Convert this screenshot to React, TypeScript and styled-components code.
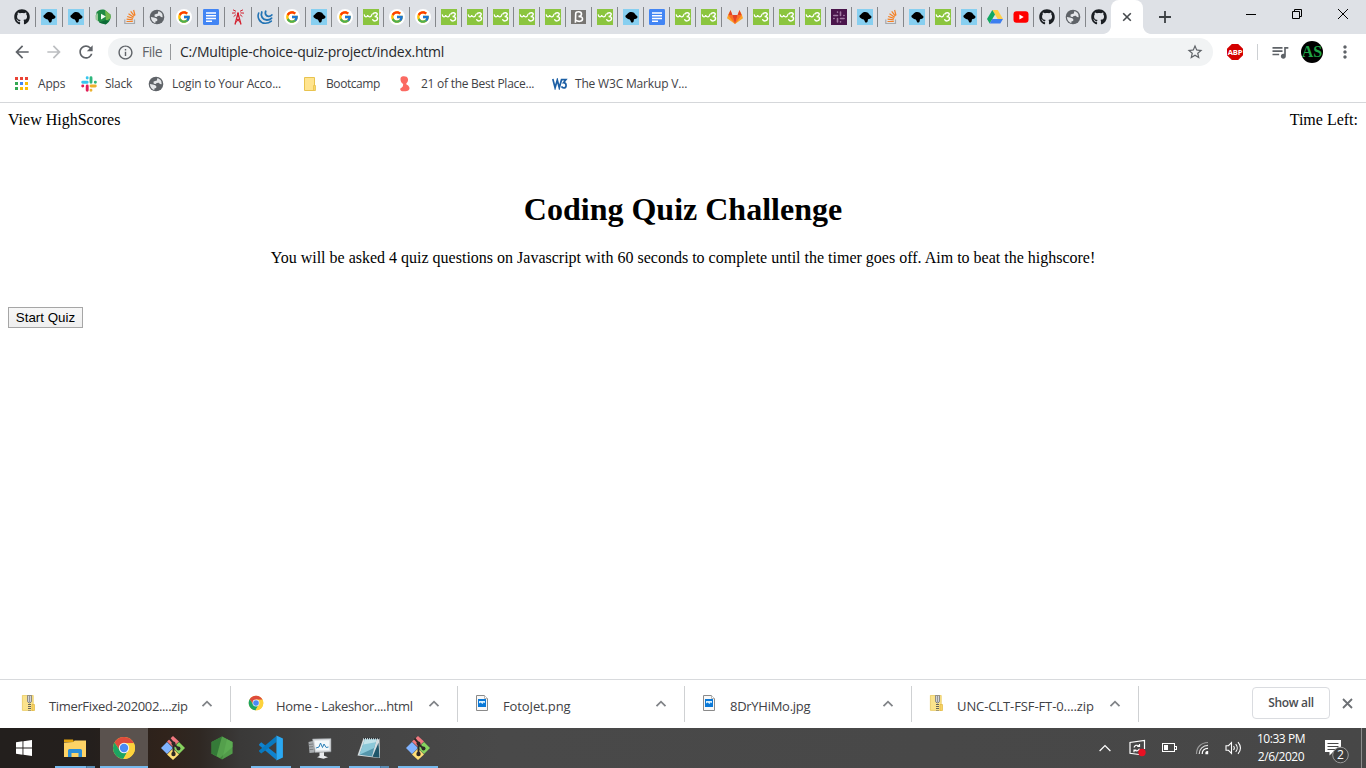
import React from "react";
import styled, { createGlobalStyle } from "styled-components";
import { FaGithub } from "react-icons/fa";
import { FcGoogle } from "react-icons/fc";
import {
  MdArrowBack,
  MdArrowForward,
  MdInfoOutline,
  MdMoreVert,
  MdQueueMusic,
  MdRefresh,
  MdStarBorder,
} from "react-icons/md";

const ui = `"Open Sans", "Noto Sans", sans-serif`;

const GlobalStyle = createGlobalStyle`
  html, body, #root { height: 100%; }
  body { margin: 0; overflow: hidden; background: #fff; }
  svg { display: block; flex: none; }
  *, *::before, *::after { box-sizing: border-box; }
`;

const Screen = styled.div`
  width: 1366px;
  height: 768px;
  display: flex;
  flex-direction: column;
  background: #fff;
  color: #000;
`;

/* ---------- tab strip ---------- */

const TabStrip = styled.div`
  flex: none;
  height: 34px;
  display: flex;
  padding-left: 9px;
  background: #dee1e6;
`;

const Tab = styled.div<{ $wide: boolean; $last: boolean }>`
  flex: none;
  width: ${(p) => (p.$last ? 25 : p.$wide ? 27 : 26)}px;
  height: 34px;
  display: flex;
  align-items: center;
  padding-left: 5px;
  background: ${(p) =>
    p.$last ? "none" : "linear-gradient(#84878b, #84878b) right 7px / 1px 20px no-repeat"};
  background-position: right 7px;
`;

const ActiveTab = styled.div`
  position: relative;
  flex: none;
  width: 32px;
  height: 34px;
  display: flex;
  align-items: center;
  justify-content: center;
  border-radius: 8px 8px 0 0;
  background: #fff;

  &::before,
  &::after {
    content: "";
    position: absolute;
    bottom: 0;
    width: 8px;
    height: 8px;
  }
  &::before {
    left: -8px;
    background: radial-gradient(circle at 0 0, transparent 7.5px, #fff 8.2px);
  }
  &::after {
    right: -8px;
    background: radial-gradient(circle at 100% 0, transparent 7.5px, #fff 8.2px);
  }
`;

const NewTab = styled.div`
  width: 28px;
  height: 34px;
  margin-left: 8px;
  display: flex;
  align-items: center;
  justify-content: center;
`;

const WindowButtons = styled.div`
  margin-left: auto;
  display: flex;
  height: 28px;
`;

const WindowButton = styled.div`
  width: 46px;
  display: flex;
  align-items: center;
  justify-content: center;
`;

const FavCircle = styled.div`
  width: 16px;
  height: 16px;
  border-radius: 50%;
  display: flex;
  align-items: center;
  justify-content: center;
  background: #fff;
`;

/* ---------- toolbar ---------- */

const Toolbar = styled.div`
  flex: none;
  height: 36px;
  display: flex;
  align-items: center;
  padding-left: 6px;
  color: #5f6368;
`;

const ToolButton = styled.div<{ $faded?: boolean; $width?: number }>`
  flex: none;
  width: ${(p) => p.$width ?? 32}px;
  display: flex;
  justify-content: center;
  color: ${(p) => (p.$faded ? "#bcbec1" : "#5f6368")};
`;

const Omnibox = styled.div`
  flex: none;
  width: 1105px;
  height: 28px;
  margin-left: 6px;
  display: flex;
  align-items: center;
  padding: 0 9px 0 9px;
  border-radius: 14px;
  background: #f1f3f4;
  font: 14px/28px ${ui};
`;

const Scheme = styled.span`
  width: 28px;
  margin-left: 8px;
  letter-spacing: -0.5px;
  color: #5f6368;
`;

const Address = styled.span`
  flex: 1;
  padding-left: 9px;
  letter-spacing: -0.235px;
  color: #27292c;
`;

const VLine = styled.div<{ $color?: string }>`
  flex: none;
  width: 1px;
  height: 16px;
  background: ${(p) => p.$color ?? "#96999c"};
`;

const Avatar = styled.div`
  flex: none;
  width: 22px;
  height: 22px;
  border-radius: 50%;
  overflow: hidden;
  background: #000;
`;

/* ---------- bookmarks ---------- */

const BookmarkBar = styled.div`
  flex: none;
  height: 33px;
  display: flex;
  align-items: flex-start;
  padding-left: 14px;
  border-bottom: 1px solid #d5d7da;
`;

const Bookmark = styled.div<{ $width: number; $gap: number; $spacing: number }>`
  flex: none;
  width: ${(p) => p.$width}px;
  height: 28px;
  display: flex;
  align-items: center;
  gap: ${(p) => p.$gap}px;
  font: 12px/28px ${ui};
  letter-spacing: ${(p) => p.$spacing}px;
  white-space: nowrap;
  color: #3f4246;
`;

/* ---------- page ---------- */

const Page = styled.main`
  flex: 1;
  padding: 8px;
  font: 16px/18px "Liberation Serif", serif;
`;

const PageTop = styled.div`
  display: flex;
  justify-content: space-between;
`;

const Title = styled.h1`
  margin: 62px 0 0;
  font-size: 32px;
  line-height: 37px;
  text-align: center;
`;

const Intro = styled.p`
  margin: 21px 0 40px;
  text-align: center;
`;

const StartButton = styled.button`
  display: block;
  width: 75px;
  height: 21px;
  padding: 0;
  border: 1px solid #a6a6a6;
  border-radius: 0;
  background: linear-gradient(#f7f7f7, #efefef);
  color: #000;
  font: 13.33px/18px "Liberation Sans", sans-serif;
`;

/* ---------- download shelf ---------- */

const Shelf = styled.div`
  flex: none;
  height: 49px;
  display: flex;
  padding-left: 4px;
  border-top: 1px solid #d8dadd;
`;

const Download = styled.div`
  flex: none;
  width: 227px;
  height: 36px;
  margin-top: 6px;
  display: flex;
  align-items: flex-start;
  padding: 9px 17px 0 17px;
  border-right: 1px solid #cfd1d3;
`;

const FileName = styled.span<{ $spacing: number }>`
  flex: 1;
  padding-left: 12px;
  margin-top: 1px;
  font: 13px/20px ${ui};
  letter-spacing: ${(p) => p.$spacing}px;
  white-space: nowrap;
  color: #3f4246;
`;

const Chevron = styled.svg`
  margin-top: 3px;
`;

const ShowAll = styled.div`
  flex: none;
  width: 78px;
  height: 32px;
  margin: 7px 12px 0 auto;
  border: 1px solid #dadce0;
  border-radius: 4px;
  text-align: center;
  font: 600 12px/30px ${ui};
  letter-spacing: -0.35px;
  color: #4a4d51;
`;

const ShelfClose = styled.svg`
  margin: 18px 13px 0 0;
`;

/* ---------- taskbar ---------- */

const Taskbar = styled.div`
  flex: none;
  height: 40px;
  display: flex;
  background: linear-gradient(
    90deg,
    #231f1d 0,
    #241f1d 90px,
    #30231b 165px,
    #2f2823 200px,
    #3a3938 240px,
    #444444 330px,
    #494949 500px,
    #474747 100%
  );
`;

const StartMenu = styled.div`
  width: 48px;
  margin-right: 3px;
  display: flex;
  align-items: center;
  justify-content: center;
`;

const bar = {
  none: "none",
  one: "linear-gradient(#76b9ed, #76b9ed) 4px 38px / 40px 2px no-repeat",
  many:
    "linear-gradient(90deg, #76b9ed 31px, #49779b 31px, #49779b 32px, #5a8db5 32px) 4px 38px / 40px 2px no-repeat",
  active: "linear-gradient(#76b9ed, #76b9ed) 0 38px / 48px 2px no-repeat, #5a524e",
};

const TaskItem = styled.div<{ $state: keyof typeof bar }>`
  flex: none;
  width: 48px;
  height: 40px;
  margin-right: 1px;
  display: flex;
  align-items: center;
  justify-content: center;
  background: ${(p) => bar[p.$state]};
`;

const Tray = styled.div`
  margin-left: auto;
  display: flex;
`;

const TrayItem = styled.div<{ $width: number }>`
  flex: none;
  width: ${(p) => p.$width}px;
  height: 40px;
  display: flex;
  align-items: center;
  justify-content: center;
`;

const Clock = styled.div`
  width: 64px;
  padding-top: 2px;
  text-align: center;
  font: 12px/18px ${ui};
  letter-spacing: -0.45px;
  white-space: nowrap;
  color: #fff;
`;

const ShowDesktop = styled.div`
  width: 5px;
  height: 40px;
  border-left: 1px solid #8c8c8c;
`;

/* ---------- icons ---------- */

const Beagle = () => (
  <svg width="16" height="16" viewBox="0 0 16 16">
    <path fill="#87cff0" d="M0 0h16v16H0z" />
    <path d="M2.600 6.600C3.500 5.800 4.300 5.300 5 4.200 6.500 2.700 9.300 2.700 11 3.800l2 2.500c1.300.6 1.700 1.400 1.400 2.300-.6 1.300-2 1.600-3.400 1.700-.3.500-.1 1.200-.3 2C10.300 13.800 8.500 14 8 12.900c-.2-1-.5-1.800-1.200-2.500-1.300-.3-2.300-.6-3.200-1.400C2.600 8.700 2.100 7.500 2.600 6.600z" />
  </svg>
);

const Globe = ({ size = 16 }: { size?: number }) => (
  <svg width={size} height={size} viewBox="0 0 16 16">
    <circle cx="8" cy="8" r="7.3" fill="#5f6368" />
    <path
      fill="#e4e6e9"
      d="M9.200 2.200c1.800.3 3.300 1.300 4.100 3l.4 3.100-1.800-.2-1-1.400-2.300.2-.7 1.100-2.100-.3-.4-2 1.600-.7 1.900-.4zM1.900 8.100l2.900.4 2.600.8 1.100 1.500-.5 1.300-1.600.3-.1 1.800C4 13.500 2 11.300 1.900 8.100z"
    />
  </svg>
);

const Google = () => (
  <FavCircle>
    <FcGoogle size={14} />
  </FavCircle>
);

const Github = () => <FaGithub size={16} color="#1b1f23" />;

const Docs = () => (
  <svg width="16" height="16" viewBox="0 0 16 16">
    <rect width="16" height="16" rx="1.2" fill="#4285f4" />
    <path stroke="#fff" strokeWidth="1.5" d="M3 4h10M3 6.8h10M3 9.5h10M3 12.3h6" />
  </svg>
);

const W3 = () => (
  <svg width="16" height="16" viewBox="0 0 16 16">
    <path fill="#8bc53f" d="M0 0h16v16H0z" />
    <g fill="none" stroke="#fff" strokeLinecap="round">
      <path strokeWidth="1.300" d="M1.300 5.800c.1 2.700 3.200 2.700 3.400.2.300 2.600 3.700 2.400 4.200-.5" />
      <path strokeWidth="1.500" d="M10 4.900c.7-1.700 4.600-1.600 4.200.6-.2 1.300-1.400 1.800-2.600 1.900 2 0 3.100.9 2.900 2.500-.3 2.300-3.800 2.700-4.700.8" />
    </g>
  </svg>
);

const StackOverflow = () => (
  <svg width="16" height="16" viewBox="0 0 16 16" fill="none" strokeWidth="1.2">
    <path stroke="#a7a9ac" d="M2.800 10.500v4h9.700v-4" />
    <path stroke="#f48024" d="M4.500 12.500h6.300M4.600 10.200l6.200.7M5.200 7.500l5.900 1.900M6.500 4.800l5.200 3.400M8.700 2.400l3.700 4.800M11.600 1l1.400 5.500" />
  </svg>
);

const GreenPlay = () => (
  <svg width="16" height="16" viewBox="0 0 16 16">
    <path fill="#1f8a43" d="M1.500 3.500C3 1 6.500-.3 9.500.8l5.800 4.700c1.300 3-.8 8.200-4.300 9.700L5 14 1 9.500z" />
    <path fill="#9bc99b" d="M.3 6.500 3 4v8.500L.6 10.500z" />
    <path fill="#72b84a" d="m10 1 5.300 4.500L15.700 9 11 12z" />
    <path fill="#0c6a36" d="m4 13.500 7-2.500 3 1.300-3.500 3.200z" />
    <path fill="#f2fff2" d="M6 4.800v5.700l4.800-2.900z" />
  </svg>
);

const Antenna = () => (
  <svg width="16" height="16" viewBox="0 0 16 16" fill="none" stroke="#d3202f">
    <path strokeWidth="1.300" d="M7.800 5 5 15.500M8.200 5 11 15.500" />
    <path strokeWidth="2" d="M8 3.500v4" />
    <path strokeWidth="1" d="m6.700 9.500 3.600 4.200M9.300 9.500l-3.600 4.200" />
    <path strokeWidth="1" d="M6 2.300 3 .8M5.600 3.900 2 4.100M6 5.600 3.600 7.600M10 2.300l3-1.500M10.400 3.900l3.600.2M10 5.600l2.400 2" />
  </svg>
);

const Jquery = () => (
  <svg width="16" height="16" viewBox="0 0 16 16" fill="none" stroke="#2374b5" strokeLinecap="round">
    <path strokeWidth="1.600" d="M1.700 4C-.2 8.500 2.700 14 8 14.300c2.700.1 4.600-.6 6.300-2.200" />
    <path strokeWidth="1.800" d="M4.800 3c-1.500 4 .9 7.800 4.900 8 2.100.1 3.700-.6 4.900-1.900" />
    <path strokeWidth="1.800" d="M8.700 2.300c-1 2.700.5 4.800 2.800 5 1.400.1 2.500-.4 3.300-1.300" />
  </svg>
);

const Bootstrap = () => (
  <svg width="16" height="16" viewBox="0 0 16 16">
    <path fill="#777572" d="M0 1h15v14H0z" />
    <path
      fill="none"
      stroke="#fff"
      strokeWidth="1.6"
      d="M4.400 13.800 4.700 4.500c.3-2.300 5.800-2.500 5.800.5 0 1.600-1.200 2.300-3 2.400 2.700 0 4.300.8 4 2.800-.3 2.700-4.500 2.600-6.700 1"
    />
  </svg>
);

const Gitlab = () => (
  <svg width="16" height="16" viewBox="0 0 16 16">
    <path fill="#fca326" d="M8 15 0 9.200l1.300-4 2.300-4 1.800 5h5.200l1.800-5 2.300 4 1.300 4z" />
    <path fill="#fc6d26" d="M8 15 1.200 6h4.200zM8 15l6.800-9h-4.200z" />
    <path fill="#e24329" d="M5.400 6h5.200L8 15zM3.500 1 5.400 6H1.500zM12.500 1l2 5h-3.900z" />
  </svg>
);

const SlackTab = () => (
  <svg width="16" height="16" viewBox="0 0 16 16">
    <path fill="#4a154b" d="M0 0h16v16H0z" />
    <path
      fill="none"
      stroke="#a07ba2"
      strokeWidth="1.600"
      strokeLinecap="round"
      d="M2.800 6.500h3.700M6.500 3v.3M9.500 3v3.500M12.800 6.500h.3M9.500 9.500h3.600M9.500 12.700v.3M6.500 9.500V13M2.800 9.500h.3"
    />
  </svg>
);

const Drive = () => (
  <svg width="16" height="16" viewBox="0 0 16 16">
    <path fill="#ffcf48" d="M5.300 1h5.400L16 10h-5.300z" />
    <path fill="#11a861" d="M5.300 1 8 5.500 2.700 14.600 0 10z" />
    <path fill="#3d7ef0" d="M5.300 10H16l-2.700 4.600H2.700z" />
  </svg>
);

const YouTube = () => (
  <svg width="16" height="16" viewBox="0 0 16 16">
    <rect x="0.5" y="2.2" width="15" height="11.6" rx="3" fill="#f00" />
    <path fill="#fff" d="M6.400 5.500v5L10.700 8z" />
  </svg>
);

const SlackColor = () => (
  <svg width="16" height="16" viewBox="0 0 16 16" fill="none" strokeWidth="2.9" strokeLinecap="round">
    <path stroke="#36c5f0" d="M1.700 6.300h4.500M6.200 1.800v.2" />
    <path stroke="#2eb67d" d="M10 1.800v4.400M14.300 6.200h.1" />
    <path stroke="#ecb22e" d="M10 10h4.300M10 14.200v.1" />
    <path stroke="#e01e5a" d="M6.200 10v4.300M1.700 10h.1" />
  </svg>
);

const AppsGrid = () => (
  <svg width="14" height="14" viewBox="0 0 14 14" shapeRendering="crispEdges">
    <path fill="#ea4335" d="M1 0h3v3H1zM6 0h3v3H6zM11 0h3v3h-3z" />
    <path fill="#34a853" d="M1 5h3v3H1zM1 10h3v3H1z" />
    <path fill="#4285f4" d="M6 5h3v3H6z" />
    <path fill="#fbbc05" d="M11 5h3v3h-3zM6 10h3v3H6zM11 10h3v3h-3z" />
  </svg>
);

const Folder = () => (
  <svg width="14" height="16" viewBox="0 0 14 16">
    <path fill="#ffe48f" stroke="#e8c34f" d="M1.500 1.500h10v13h-10z" />
    <path fill="#f9d769" stroke="#e8c34f" strokeWidth=".8" d="M10.500 9.500h2v5h-2z" />
  </svg>
);

const PinkFigure = () => (
  <svg width="12" height="16" viewBox="0 0 12 16" fill="#fb6a62">
    <path d="M1.800 1.500C3-.2 8.500-.3 9 3c.3 2-.8 3.500-1.700 4.500v2.200H4.200V8C2.300 7.200.8 4 1.800 1.500z" />
    <path d="M4 8.500h3.600c2.500 1.300 3.600 3.500 2.600 5-1.500 2-4.800 2-7 1.700C1 14.500.5 12.500 2.500 11.700 3.700 11 4.200 10 4 8.500z" />
  </svg>
);

const W3C = () => (
  <svg width="16" height="12" viewBox="0 0 16 12" fill="none" stroke="#1c5fa5" strokeWidth="1.7">
    <path d="m.8 1 2.300 8.800L5.300 2l2 7.800L9.700 1" />
    <path d="M9.300 1.700h4.600l-2.400 3c3.500.2 3.300 5.200.2 5.200-1 0-1.800-.6-2.200-1.500" />
  </svg>
);

const Abp = () => (
  <svg width="16" height="16" viewBox="0 0 16 16">
    <path fill="#d40000" d="M4.800 0h6.400L16 4.800v6.400L11.200 16H4.800L0 11.200V4.800z" />
    <text x="8" y="10.8" fill="#fff" textAnchor="middle" fontFamily="Open Sans, sans-serif" fontWeight="700" fontSize="7.600" letterSpacing="-0.2">
      ABP
    </text>
  </svg>
);

const ZipFile = () => (
  <svg width="16" height="18" viewBox="0 1 16 18">
    <path fill="#fbe38c" stroke="#e8c85c" strokeWidth=".8" d="M1.400 1.400h10.800v15H1.400z" />
    <path fill="#f7d264" stroke="#e3b941" strokeWidth=".7" d="M11 10.500h2.500v6H11z" />
    <path stroke="#66645c" strokeWidth="3" strokeDasharray="1 1" d="M8.500 8v8.500" />
    <path fill="#d8dadd" stroke="#777" strokeWidth=".8" d="M6.500 1.400h4v6.300l-2 1.300-2-1.300z" />
    <path stroke="#555" strokeWidth="1.200" strokeDasharray="1 1" d="M8.500 2.500v5" />
  </svg>
);

const ImageFile = () => (
  <svg width="16" height="18" viewBox="0 1 16 18">
    <path fill="#f8f8f8" stroke="#8a8a8a" d="M1.500 1.500h8l3 3v12h-11z" />
    <path fill="#fff" stroke="#a3a3a3" strokeWidth=".8" d="M9.500 1.500v3h3" />
    <path fill="#0a78d7" d="M3 5h8v8H3z" />
    <path fill="#d7f0ff" d="M4 7h6v2.300L8.800 8.300 7.500 10 5.600 8.500 4 9.600z" />
  </svg>
);

const Chrome = ({ size }: { size: number }) => (
  <svg width={size} height={size} viewBox="0 0 24 24">
    <circle cx="12" cy="12" r="11" fill="#fdd23c" />
    <path fill="#de4b3c" d="M2.480 6.500A11 11 0 0 1 21.950 7.300H12L7.900 14.400z" />
    <path fill="#1da462" d="M2.480 6.500 7.900 14.400 16 14.500 11.500 23A11 11 0 0 1 2.480 6.500z" />
    <path fill="#fdd23c" d="M12 7.300h9.950A11 11 0 0 1 11.200 23l4.900-8.600z" />
    <circle cx="12" cy="12" r="5.200" fill="#f4f4f4" />
    <circle cx="12" cy="12" r="4.200" fill="#4a8af4" />
  </svg>
);

const FileExplorer = () => (
  <svg width="24" height="24" viewBox="0 0 24 24">
    <path fill="#e2a30f" d="M1 3.500h9l1 2.500H1z" />
    <path fill="#fdd366" d="M1 6.500 10.500 6l1-1.500H23V21H1z" />
    <path fill="#2c8fd8" d="M5 21v-6.500Q5 13 6.500 13h11Q19 13 19 14.500V21h-3.500v-4h-7v4z" />
  </svg>
);

const Git = () => (
  <svg width="26" height="26" viewBox="0 0 26 26">
    <path fill="#f0787f" d="m13 1 6 5.500-6 5.500-6-5.500z" />
    <path fill="#80b3ff" d="m7 7 6 6-6 6-6-6z" />
    <path fill="#87d35f" d="m19 7 6 6-6 6-6-6z" />
    <path fill="#ffdf76" d="m13 13.500 6 6-6 5.500-6-5.500z" />
    <g stroke="#2d2826" strokeWidth="1.9" fill="none">
      <path d="M9.500 3.500 13.500 8v12M13.500 9l5 4.500" />
    </g>
    <g fill="#2d2826">
      <circle cx="13.5" cy="8.5" r="2" />
      <circle cx="18.5" cy="13.5" r="2" />
      <circle cx="13.5" cy="19" r="2.2" />
    </g>
  </svg>
);

const NodeHex = () => (
  <svg width="24" height="26" viewBox="0 0 24 26">
    <path fill="#43853d" d="M12 1.500 22.500 7v11.500L12 24.500 1.500 18.500V7z" />
    <path fill="#54a04c" d="M12 1.500 22.500 7v5L10 23 1.500 18.500z" />
    <path fill="#357a38" d="M1.500 7 12 1.500 6.500 21.500l-5-3z" />
    <path fill="#67b85a" d="m17 4.200 5.500 2.800v11.500L12 24.500z" opacity=".45" />
  </svg>
);

const VsCode = () => (
  <svg width="26" height="26" viewBox="0 0 24 24">
    <path fill="#0f83cf" d="m1 8.500 2-1.700L17 17.500V23L1 9.500z" />
    <path fill="#0879bf" d="m1 15.300 2 1.700L17 6.500V1L1 14.300z" />
    <path fill="#2aa8f2" d="m17 .5 6 2.800v17.400l-6 2.800z" />
  </svg>
);

const Monitor = () => (
  <svg width="26" height="26" viewBox="0 0 26 26">
    <path fill="#a9adb0" d="m1.500 7 6-1.500v12L2.500 18z" />
    <path stroke="#6d7174" strokeWidth=".8" d="m2 9.500 4-.5M2 12l4-.3M2.500 14.500l4-.2" />
    <path fill="#d7dadd" stroke="#8a8e92" strokeWidth=".6" d="M5.500 4 24 3.500v13.300L8 17.500z" />
    <path fill="#f4f8fa" d="m7.500 5.800 14.800-.6v10L9 15.500z" />
    <path fill="none" stroke="#2c80b8" d="m9 13 3-1 1.500-4 2 4.500 1.500-3.500 2.200 3.500 2.300-.5" />
    <path fill="#e8eaec" d="m12.500 17.500 4.500-.2v3.500l4 1.400-4.500 1.600-6.500-1.500 2.500-1.300z" />
  </svg>
);

const Notepad = () => (
  <svg width="26" height="26" viewBox="0 0 26 26">
    <path fill="#d5dde0" d="m7.500 3 16 .5.500 19.500-8-.8L1.500 20.500z" />
    <path fill="#5596ab" d="m9 4 11.500.3L16 21.500 3.500 19.800z" />
    <path fill="#8cc8d8" d="m9 4 11.500.3-2.300 8.700L3.500 19.800z" />
    <path fill="#c3e3ea" d="m9 4 11.500.3-.9 3L7.300 9.500z" />
    <path fill="#1f5569" d="m16.500 21.800 6-14 1 15z" />
    <path stroke="#263238" strokeWidth="1.5" strokeDasharray="1 1" d="M8 3.500h15" />
  </svg>
);

const WindowsLogo = () => (
  <svg width="16" height="16" viewBox="0 0 16 16" fill="#fff">
    <path d="M0 2.200 6.500 1.300v6.300H0zM7.400 1.200 16 0v7.600H7.400zM0 8.400h6.500v6.300L0 13.800zM7.400 8.400H16V16l-8.600-1.200z" />
  </svg>
);

const SyncIcon = () => (
  <svg width="18" height="18" viewBox="0 0 18 18" fill="none" stroke="#fff" strokeWidth="1.2">
    <path d="M16.500 10V1.500L2 3.500v10.800l9 1.200" />
    <path d="M6 8.500c.5-2 3-3 5-1.500M11.500 5v2.500H9.200M11.500 9.800c-1 2-3 2.700-4.800 1.400M6 13.300V11h2.300" />
    <circle cx="14" cy="13.5" r="3.700" fill="#e81123" stroke="none" />
  </svg>
);

const Battery = () => (
  <svg width="17" height="12" viewBox="0 0 17 12" shapeRendering="crispEdges">
    <path fill="none" stroke="#fff" d="M1.500 1.500h12v8h-12zM14 4.500h1.500v3H14" />
    <path fill="#fff" d="M3 3h4v5H3z" />
  </svg>
);

const Wifi = () => (
  <svg width="14" height="14" viewBox="0 0 14 14" fill="none" strokeWidth="1.2">
    <path stroke="#9b9b9b" d="M1.500 13C1.500 6 6 1.700 13 1.500" />
    <path stroke="#ddd" d="M4.200 13c0-5 3.800-8.500 8.800-8.600" />
    <path stroke="#fff" d="M7.200 13c0-3.500 2.500-5.500 5.800-5.600" />
    <path fill="#fff" stroke="none" d="M12.500 10a2.500 2.500 0 0 0-2 3.200h2.700V10z" />
  </svg>
);

const Volume = () => (
  <svg width="18" height="14" viewBox="0.500 0 18 14" fill="none" stroke="#fff" strokeWidth="1.1">
    <path d="M1.500 4.700H4l3-3v10.600l-3-3H1.500zM9 5c1 1.200 1 2.800 0 4M11.200 3.200c2 2.200 2 5.400 0 7.600M13.500 1.200c3 3.500 3 8 0 11.600" />
  </svg>
);

const Notification = () => (
  <svg width="28" height="32" viewBox="0 0 28 32">
    <path fill="#fff" d="M2 8h16v12h-8l-3.500 3.500V20H2z" />
    <path stroke="#484848" d="M4.500 11.500h11M4.500 14.500h11M4.500 17.500h8" />
    <circle cx="17.500" cy="23" r="7.800" fill="#3e3e3e" stroke="#9a9a9a" />
    <text x="17.500" y="27.300" fill="#fff" fontFamily="Open Sans, sans-serif" fontSize="12" textAnchor="middle">
      2
    </text>
  </svg>
);

const icons = {
  gh: Github,
  bg: Beagle,
  gp: GreenPlay,
  so: StackOverflow,
  gl: Globe,
  go: Google,
  dc: Docs,
  an: Antenna,
  jq: Jquery,
  w3: W3,
  bs: Bootstrap,
  lab: Gitlab,
  sl: SlackTab,
  dr: Drive,
  yt: YouTube,
};

const tabs = (
  "gh bg bg gp so gl go dc an jq go " +
  "bg go w3 go go w3 w3 w3 w3 w3 bs w3 bg dc w3 w3 lab w3 w3 w3 sl bg so bg w3 bg dr yt gh gl gh"
).split(" ") as (keyof typeof icons)[];

const bookmarks = [
  { label: "Apps", icon: <AppsGrid />, width: 67, gap: 10, spacing: -0.2 },
  { label: "Slack", icon: <SlackColor />, width: 67, gap: 8, spacing: -0.25 },
  { label: "Login to Your Acco...", icon: <Globe />, width: 155, gap: 8, spacing: -0.2 },
  { label: "Bootcamp", icon: <Folder />, width: 96, gap: 9, spacing: -0.42 },
  { label: "21 of the Best Place...", icon: <PinkFigure />, width: 153, gap: 10, spacing: -0.26 },
  { label: "The W3C Markup V...", icon: <W3C />, width: 150, gap: 7, spacing: -0.18 },
];

const downloads = [
  { name: "TimerFixed-202002....zip", icon: <ZipFile />, spacing: -0.35 },
  { name: "Home - Lakeshor....html", icon: <Chrome size={16} />, spacing: -0.35 },
  { name: "FotoJet.png", icon: <ImageFile />, spacing: -0.12 },
  { name: "8DrYHiMo.jpg", icon: <ImageFile />, spacing: -0.27 },
  { name: "UNC-CLT-FSF-FT-0....zip", icon: <ZipFile />, spacing: -0.1 },
];

const tasks: { icon: React.ReactNode; state: keyof typeof bar }[] = [
  { icon: <FileExplorer />, state: "many" },
  { icon: <Chrome size={24} />, state: "active" },
  { icon: <Git />, state: "none" },
  { icon: <NodeHex />, state: "none" },
  { icon: <VsCode />, state: "one" },
  { icon: <Monitor />, state: "one" },
  { icon: <Notepad />, state: "many" },
  { icon: <Git />, state: "one" },
];

export default function App() {
  return (
    <Screen>
      <GlobalStyle />
      <TabStrip>
        {tabs.map((id, i) => {
          const Icon = icons[id];
          return (
            <Tab key={i} $wide={i < 11} $last={i === tabs.length - 1}>
              <Icon />
            </Tab>
          );
        })}
        <ActiveTab>
          <svg width="10" height="10" viewBox="0 0 10 10" stroke="#45494d" strokeWidth="1.6">
            <path d="m1.200 1.200 7.600 7.600M8.800 1.200 1.200 8.800" />
          </svg>
        </ActiveTab>
        <NewTab>
          <svg width="12" height="12" viewBox="0 0 12 12" stroke="#3c4043" strokeWidth="1.8">
            <path d="M0 6h12M6 0v12" />
          </svg>
        </NewTab>
        <WindowButtons>
          <WindowButton>
            <svg width="10" height="10" viewBox="0 0 10 10" stroke="#000">
              <path d="M0 5.500h10" />
            </svg>
          </WindowButton>
          <WindowButton>
            <svg width="10" height="10" viewBox="0 0 10 10" stroke="#000" fill="none">
              <path d="M.5 2.500h7v7h-7zM2.500 2V.5h7v7H8" />
            </svg>
          </WindowButton>
          <WindowButton>
            <svg width="10" height="10" viewBox="0 0 10 10" stroke="#000">
              <path d="m0 0 10 10M10 0 0 10" />
            </svg>
          </WindowButton>
        </WindowButtons>
      </TabStrip>

      <Toolbar>
        <ToolButton>
          <MdArrowBack size={20} />
        </ToolButton>
        <ToolButton $faded>
          <MdArrowForward size={20} />
        </ToolButton>
        <ToolButton>
          <MdRefresh size={20} />
        </ToolButton>
        <Omnibox>
          <MdInfoOutline size={17} color="#5f6368" />
          <Scheme>File</Scheme>
          <VLine />
          <Address>C:/Multiple-choice-quiz-project/index.html</Address>
          <MdStarBorder size={18} color="#5f6368" />
        </Omnibox>
        <ToolButton $width={44}>
          <Abp />
        </ToolButton>
        <VLine $color="#cdd0d3" />
        <ToolButton $width={43}>
          <MdQueueMusic size={20} />
        </ToolButton>
        <Avatar>
          <svg width="22" height="22" viewBox="0 0 22 22">
            <text x="11" y="16" fill="#1fa447" textAnchor="middle" fontFamily="Liberation Serif, serif" fontWeight="700" fontSize="16">
              AS
            </text>
          </svg>
        </Avatar>
        <ToolButton $width={43}>
          <MdMoreVert size={20} />
        </ToolButton>
      </Toolbar>

      <BookmarkBar>
        {bookmarks.map((b) => (
          <Bookmark key={b.label} $width={b.width} $gap={b.gap} $spacing={b.spacing}>
            {b.icon}
            <span>{b.label}</span>
          </Bookmark>
        ))}
      </BookmarkBar>

      <Page>
        <PageTop>
          <span>View HighScores</span>
          <span>Time Left:</span>
        </PageTop>
        <Title>Coding Quiz Challenge</Title>
        <Intro>
          You will be asked 4 quiz questions on Javascript with 60 seconds to complete until the timer goes off. Aim to
          beat the highscore!
        </Intro>
        <StartButton>Start Quiz</StartButton>
      </Page>

      <Shelf>
        {downloads.map((d) => (
          <Download key={d.name}>
            {d.icon}
            <FileName $spacing={d.spacing}>{d.name}</FileName>
            <Chevron width="12" height="12" viewBox="0 0 12 12" fill="none" stroke="#808387" strokeWidth="1.8">
              <path d="m1.500 8.200 4.500-4.500 4.500 4.500" />
            </Chevron>
          </Download>
        ))}
        <ShowAll>Show all</ShowAll>
        <ShelfClose width="11" height="11" viewBox="0 0 11 11" stroke="#6d7074" strokeWidth="1.8">
          <path d="m1 1 9 9M10 1l-9 9" />
        </ShelfClose>
      </Shelf>

      <Taskbar>
        <StartMenu>
          <WindowsLogo />
        </StartMenu>
        {tasks.map((t, i) => (
          <TaskItem key={i} $state={t.state}>
            {t.icon}
          </TaskItem>
        ))}
        <Tray>
          <TrayItem $width={32}>
            <svg width="12" height="8" viewBox="0 0 12 8" fill="none" stroke="#fff" strokeWidth="1.2">
              <path d="m.6 7 5.400-5.500L11.400 7" />
            </svg>
          </TrayItem>
          <TrayItem $width={32}>
            <SyncIcon />
          </TrayItem>
          <TrayItem $width={33}>
            <Battery />
          </TrayItem>
          <TrayItem $width={32}>
            <Wifi />
          </TrayItem>
          <TrayItem $width={31}>
            <Volume />
          </TrayItem>
          <Clock>
            10:33 PM
            <br />
            2/6/2020
          </Clock>
          <TrayItem $width={48}>
            <Notification />
          </TrayItem>
          <ShowDesktop />
        </Tray>
      </Taskbar>
    </Screen>
  );
}
